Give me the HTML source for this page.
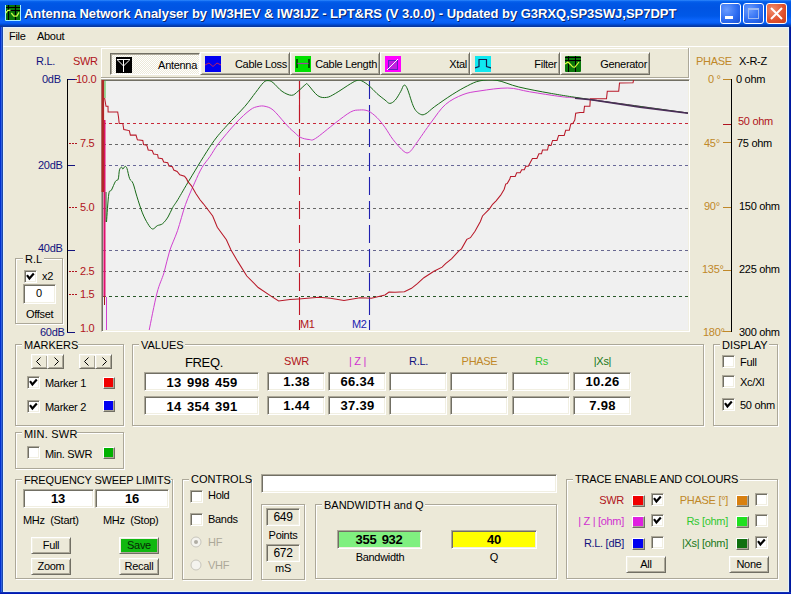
<!DOCTYPE html><html><head><meta charset="utf-8"><style>
html,body{margin:0;padding:0;}
body{width:791px;height:594px;position:relative;overflow:hidden;background:#0A4FD8;font-family:"Liberation Sans", sans-serif;}
.a{position:absolute;}
.t{position:absolute;line-height:1;white-space:nowrap;letter-spacing:-0.3px;}
</style></head><body>
<div class="a" style="left:0px;top:0px;width:791px;height:27px;background:linear-gradient(to bottom,#3A93FF 0px,#0B66F0 1px,#0058E6 3px,#0054E3 8px,#0058E8 16px,#0A64FA 20px,#0760F4 23px,#0050E0 24px,#0048C8 25px,#0838A0 26px,#0838A0 27px);"></div>
<div class="a" style="left:0px;top:27px;width:1px;height:567px;background:#0030D0;"></div>
<div class="a" style="left:1px;top:27px;width:1px;height:567px;background:#3060E0;"></div>
<div class="a" style="left:2px;top:27px;width:1px;height:567px;background:#1C48A8;"></div>
<div class="a" style="left:789px;top:27px;width:1px;height:567px;background:#102A90;"></div>
<div class="a" style="left:790px;top:27px;width:1px;height:567px;background:#0018A0;"></div>
<div class="a" style="left:0px;top:592px;width:791px;height:1px;background:#1030B0;"></div>
<div class="a" style="left:0px;top:593px;width:791px;height:1px;background:#0018B8;"></div>
<div class="a" style="left:3px;top:27px;width:786px;height:565px;background:#E4F2FC;"></div>
<div class="a" style="left:4px;top:28px;width:784px;height:563px;background:#ECE9D8;"></div>
<svg class="a" style="left:5px;top:5px" width="16" height="16"><rect width="16" height="16" fill="#0A760A"/><path d="M0.5 0 V15.5 H15.5 V0" stroke="#A8F0FF" stroke-width="1" fill="none"/><path d="M1 2.5 H15 M1 5.5 H15" stroke="#000" stroke-width="1"/><path d="M3.5 0 V15 M10.5 0 V15" stroke="#000" stroke-width="1.2"/><path d="M0.8 8 L2.5 5.6 L5.5 5.2 M6.3 8 L8.8 11.2 L11.8 11 L14 7.4" stroke="#C8FF48" stroke-width="1.3" fill="none"/></svg>
<div class="t" id="title" style="left:24px;top:7px;font-size:13px;font-weight:bold;color:#fff;letter-spacing:-0.025px;text-shadow:1px 1px 0 #0A246A;">Antenna Network Analyser by IW3HEV &amp; IW3IJZ - LPT&amp;RS (V 3.0.0) - Updated by G3RXQ,SP3SWJ,SP7DPT</div>
<div class="a" style="left:720px;top:3px;width:21px;height:21px;box-sizing:border-box;border:1px solid #fff;border-radius:3px;background:radial-gradient(circle at 30% 30%,#6A9CFF,#2A6AF0 60%,#1A50D0);"></div>
<div class="a" style="left:743px;top:3px;width:21px;height:21px;box-sizing:border-box;border:1px solid #fff;border-radius:3px;background:radial-gradient(circle at 30% 30%,#6A9CFF,#2A6AF0 60%,#1A50D0);"></div>
<div class="a" style="left:766px;top:3px;width:21px;height:21px;box-sizing:border-box;border:1px solid #fff;border-radius:3px;background:radial-gradient(circle at 30% 30%,#F08C6C,#E0502C 60%,#C8401C);"></div>
<div class="a" style="left:725px;top:16px;width:8px;height:3px;background:#fff;"></div>
<div class="a" style="left:748px;top:8px;width:11px;height:11px;box-sizing:border-box;border:1px solid #9DB9F0;border-top:2px solid #9DB9F0;"></div>
<svg class="a" style="left:766px;top:3px" width="21" height="21"><path d="M5 5 L16 16 M16 5 L5 16" stroke="#fff" stroke-width="2"/></svg>
<div class="t" style="left:9px;top:30.69px;font-size:11px;color:#000;">File</div>
<div class="t" style="left:37px;top:30.69px;font-size:11px;color:#000;">About</div>
<div class="a" style="left:3px;top:46px;width:786px;height:1px;background:#fff;"></div>
<div class="t" style="left:36px;top:55.69px;font-size:11px;color:#12127E;">R.L.</div>
<div class="t" style="left:73px;top:55.69px;font-size:11px;color:#B01420;">SWR</div>
<div class="a" style="left:67px;top:79px;width:1px;height:254px;background:#000;"></div>
<div class="a" style="left:68px;top:79px;width:7px;height:1px;background:#12127E;"></div>
<div class="a" style="left:68px;top:165px;width:7px;height:1px;background:#12127E;"></div>
<div class="a" style="left:68px;top:250px;width:7px;height:1px;background:#12127E;"></div>
<div class="a" style="left:68px;top:332px;width:7px;height:1px;background:#12127E;"></div>
<div class="a" style="left:67px;top:332px;width:8px;height:1px;background:#12127E;"></div>
<div class="t" style="left:42px;top:73.69px;font-size:11px;color:#12127E;">0dB</div>
<div class="t" style="left:38px;top:159.69px;font-size:11px;color:#12127E;">20dB</div>
<div class="t" style="left:38px;top:242.69px;font-size:11px;color:#12127E;">40dB</div>
<div class="t" style="left:40px;top:326.69px;font-size:11px;color:#12127E;">60dB</div>
<div class="t" style="left:76px;top:73.69px;font-size:11px;color:#B01420;">10.0</div>
<div class="a" style="left:75px;top:79px;width:2px;height:1px;background:#B01420;"></div>
<div class="a" style="left:69px;top:143px;width:2px;height:1px;background:#B01420;"></div>
<div class="a" style="left:72px;top:143px;width:2px;height:1px;background:#B01420;"></div>
<div class="a" style="left:75px;top:143px;width:2px;height:1px;background:#B01420;"></div>
<div class="t" style="left:80px;top:137.69px;font-size:11px;color:#B01420;">7.5</div>
<div class="a" style="left:69px;top:207px;width:2px;height:1px;background:#B01420;"></div>
<div class="a" style="left:72px;top:207px;width:2px;height:1px;background:#B01420;"></div>
<div class="a" style="left:75px;top:207px;width:2px;height:1px;background:#B01420;"></div>
<div class="t" style="left:80px;top:201.69px;font-size:11px;color:#B01420;">5.0</div>
<div class="a" style="left:69px;top:271px;width:2px;height:1px;background:#B01420;"></div>
<div class="a" style="left:72px;top:271px;width:2px;height:1px;background:#B01420;"></div>
<div class="a" style="left:75px;top:271px;width:2px;height:1px;background:#B01420;"></div>
<div class="t" style="left:80px;top:265.69px;font-size:11px;color:#B01420;">2.5</div>
<div class="a" style="left:69px;top:294px;width:2px;height:1px;background:#B01420;"></div>
<div class="a" style="left:72px;top:294px;width:2px;height:1px;background:#B01420;"></div>
<div class="a" style="left:75px;top:294px;width:2px;height:1px;background:#B01420;"></div>
<div class="t" style="left:80px;top:288.69px;font-size:11px;color:#B01420;">1.5</div>
<div class="t" style="left:80px;top:322.69px;font-size:11px;color:#B01420;">1.0</div>
<div class="a" style="left:16px;top:259px;width:48px;height:66px;box-sizing:border-box;border:1px solid #fff;"></div>
<div class="a" style="left:15px;top:258px;width:48px;height:66px;box-sizing:border-box;border:1px solid #ACA899;"></div>
<div class="a" style="left:23px;top:253px;width:21px;height:10px;background:#ECE9D8;"></div>
<div class="t" style="left:25px;top:253.69px;font-size:11px;color:#000;letter-spacing:0px;">R.L</div>
<div class="a" style="left:24px;top:270px;width:13px;height:13px;box-sizing:border-box;background:#fff;border-top:1px solid #ACA899;border-left:1px solid #ACA899;border-bottom:1px solid #fff;border-right:1px solid #fff;box-shadow:inset 1px 1px 0 #716F64, inset -1px -1px 0 #F1EFE2;"></div>
<svg class="a" style="left:24px;top:270px" width="13" height="13"><path d="M3 5.2 L5.4 8.4 L9.8 3.4" stroke="#000" stroke-width="2.2" fill="none"/></svg>
<div class="t" style="left:42px;top:270.69px;font-size:11px;color:#000;">x2</div>
<div class="a" style="left:23px;top:284px;width:33px;height:20px;background:#fff;box-sizing:border-box;border-top:1px solid #ACA899;border-left:1px solid #ACA899;border-bottom:1px solid #fff;border-right:1px solid #fff;box-shadow:inset 1px 1px 0 #716F64, inset -1px -1px 0 #F1EFE2;"></div>
<div class="t" style="left:24.0px;width:30px;text-align:center;top:288.19px;font-size:11px;color:#000;">0</div>
<div class="t" style="left:26px;top:308.69px;font-size:11px;color:#000;">Offset</div>
<div class="t" style="left:696px;top:55.69px;font-size:11px;color:#C08828;">PHASE</div>
<div class="t" style="left:739px;top:55.69px;font-size:11px;color:#000;">X-R-Z</div>
<div class="a" style="left:731px;top:79px;width:1px;height:253px;background:#000;"></div>
<div class="a" style="left:723px;top:79px;width:8px;height:1px;background:#C08828;"></div>
<div class="a" style="left:723px;top:142px;width:8px;height:1px;background:#C08828;"></div>
<div class="a" style="left:723px;top:207px;width:8px;height:1px;background:#C08828;"></div>
<div class="a" style="left:723px;top:270px;width:8px;height:1px;background:#C08828;"></div>
<div class="a" style="left:723px;top:331px;width:8px;height:1px;background:#C08828;"></div>
<div class="a" style="left:723px;top:124px;width:8px;height:1px;background:#B01420;"></div>
<div class="t" style="left:708px;top:73.69px;font-size:11px;color:#C08828;">0 °</div>
<div class="t" style="left:736px;top:73.69px;font-size:11px;color:#000;">0 ohm</div>
<div class="t" style="left:738px;top:115.69px;font-size:11px;color:#B01420;">50 ohm</div>
<div class="t" style="left:704px;top:137.69px;font-size:11px;color:#C08828;">45°</div>
<div class="t" style="left:737px;top:137.69px;font-size:11px;color:#000;">75 ohm</div>
<div class="t" style="left:704px;top:200.69px;font-size:11px;color:#C08828;">90°</div>
<div class="t" style="left:739px;top:200.69px;font-size:11px;color:#000;">150 ohm</div>
<div class="t" style="left:702px;top:263.69px;font-size:11px;color:#C08828;">135°</div>
<div class="t" style="left:739px;top:263.69px;font-size:11px;color:#000;">225 ohm</div>
<div class="t" style="left:703px;top:326.69px;font-size:11px;color:#C08828;">180°</div>
<div class="t" style="left:739px;top:326.69px;font-size:11px;color:#000;">300 ohm</div>
<div class="a" style="left:101px;top:48px;width:589px;height:31px;box-sizing:border-box;border:1px solid #fff;"></div>
<div class="a" style="left:101px;top:77px;width:588px;height:1px;background:#ACA899;"></div>
<div class="a" style="left:688px;top:48px;width:1px;height:30px;background:#ACA899;"></div>
<div class="a" style="left:110px;top:53px;width:90px;height:22px;box-sizing:border-box;background:repeating-conic-gradient(#fff 0 25%, #ECE9D8 0 50%) 0 0/2px 2px;border-top:1px solid #716F64;border-left:1px solid #716F64;border-bottom:1px solid #fff;border-right:1px solid #fff;box-shadow:inset 1px 1px 0 #ACA899;"></div>
<div class="t" style="left:117px;width:80px;text-align:right;top:59.69px;font-size:11px;color:#000;">Antenna</div>
<div class="a" style="left:200px;top:52px;width:90px;height:23px;background:#ECE9D8;box-sizing:border-box;border-top:1px solid #fff;border-left:1px solid #fff;border-bottom:1px solid #716F64;border-right:1px solid #716F64;box-shadow:inset 1px 1px 0 #F1EFE2, inset -1px -1px 0 #ACA899;"></div>
<div class="t" style="left:207px;width:80px;text-align:right;top:58.69px;font-size:11px;color:#000;">Cable Loss</div>
<div class="a" style="left:290px;top:52px;width:90px;height:23px;background:#ECE9D8;box-sizing:border-box;border-top:1px solid #fff;border-left:1px solid #fff;border-bottom:1px solid #716F64;border-right:1px solid #716F64;box-shadow:inset 1px 1px 0 #F1EFE2, inset -1px -1px 0 #ACA899;"></div>
<div class="t" style="left:297px;width:80px;text-align:right;top:58.69px;font-size:11px;color:#000;">Cable Length</div>
<div class="a" style="left:380px;top:52px;width:90px;height:23px;background:#ECE9D8;box-sizing:border-box;border-top:1px solid #fff;border-left:1px solid #fff;border-bottom:1px solid #716F64;border-right:1px solid #716F64;box-shadow:inset 1px 1px 0 #F1EFE2, inset -1px -1px 0 #ACA899;"></div>
<div class="t" style="left:387px;width:80px;text-align:right;top:58.69px;font-size:11px;color:#000;">Xtal</div>
<div class="a" style="left:470px;top:52px;width:90px;height:23px;background:#ECE9D8;box-sizing:border-box;border-top:1px solid #fff;border-left:1px solid #fff;border-bottom:1px solid #716F64;border-right:1px solid #716F64;box-shadow:inset 1px 1px 0 #F1EFE2, inset -1px -1px 0 #ACA899;"></div>
<div class="t" style="left:477px;width:80px;text-align:right;top:58.69px;font-size:11px;color:#000;">Filter</div>
<div class="a" style="left:560px;top:52px;width:90px;height:23px;background:#ECE9D8;box-sizing:border-box;border-top:1px solid #fff;border-left:1px solid #fff;border-bottom:1px solid #716F64;border-right:1px solid #716F64;box-shadow:inset 1px 1px 0 #F1EFE2, inset -1px -1px 0 #ACA899;"></div>
<div class="t" style="left:567px;width:80px;text-align:right;top:58.69px;font-size:11px;color:#000;">Generator</div>
<svg class="a" style="left:116px;top:57px" width="16" height="16"><rect width="16" height="16" fill="#000"/><path d="M1.3 2.8 L7.5 9 L13.8 2.8 M1 2.5 H14 M7.5 2.5 V15" stroke="#fff" stroke-width="1" fill="none"/></svg>
<svg class="a" style="left:205px;top:56px" width="16" height="16"><rect width="16" height="16" fill="#0000F0"/><path d="M0 9 L4 7 L8 10.5 L12 7 L16 9" stroke="#C02060" stroke-width="1" fill="none"/></svg>
<svg class="a" style="left:295px;top:56px" width="16" height="16"><rect width="16" height="16" fill="#00E000"/><path d="M2 3 V12 M14 3 V12" stroke="#000" stroke-width="1.2"/><path d="M2.5 7.5 H13.5" stroke="#A040A0" stroke-width="1.2"/></svg>
<svg class="a" style="left:385px;top:56px" width="16" height="16"><rect width="16" height="16" fill="#FF00FF"/><rect x="3.5" y="4.5" width="9" height="9" fill="#C020E0" stroke="#6020C0" stroke-width="1"/><path d="M2 14 L13 3" stroke="#fff" stroke-width="1"/></svg>
<svg class="a" style="left:475px;top:56px" width="16" height="16"><rect width="16" height="16" fill="#10E8F0"/><path d="M0 12 L4 10.5 V3.5 H11.5 V10.5 L16 12" stroke="#102050" stroke-width="1.2" fill="none"/></svg>
<svg class="a" style="left:565px;top:56px" width="16" height="16"><rect width="16" height="16" rx="1" fill="#0A780A"/><path d="M0 1.5 H16 M0 4.5 H16 M3.5 0 V16 M10.5 0 V16" stroke="#000" stroke-width="1"/><path d="M0 8 L3 6 L6 9 Q8 12 10 11 L14 6" stroke="#DFFF40" stroke-width="1.2" fill="none"/></svg>
<div class="a" style="left:101px;top:79px;width:589px;height:253px;background:#F0F0F0;box-sizing:border-box;border-top:1px solid #ACA899;border-left:1px solid #ACA899;border-bottom:1px solid #fff;border-right:1px solid #fff;box-shadow:inset 1px 1px 0 #716F64, inset -1px -1px 0 #F1EFE2;"></div>
<svg class="a" style="left:101px;top:80px" width="587" height="250" viewBox="101 80 587 250"><line x1="103" y1="123.5" x2="688" y2="123.5" stroke="#C82838" stroke-width="1" stroke-dasharray="3 3"/><line x1="103" y1="144.5" x2="688" y2="144.5" stroke="#686868" stroke-width="1" stroke-dasharray="3 3"/><line x1="103" y1="165.5" x2="688" y2="165.5" stroke="#686898" stroke-width="1" stroke-dasharray="3 3"/><line x1="103" y1="208.5" x2="688" y2="208.5" stroke="#686868" stroke-width="1" stroke-dasharray="3 3"/><line x1="103" y1="250.5" x2="688" y2="250.5" stroke="#686890" stroke-width="1" stroke-dasharray="3 3"/><line x1="103" y1="271.5" x2="688" y2="271.5" stroke="#686868" stroke-width="1" stroke-dasharray="3 3"/><line x1="103" y1="296.5" x2="688" y2="296.5" stroke="#285828" stroke-width="1" stroke-dasharray="3 3"/><line x1="299.5" y1="81" x2="299.5" y2="315" stroke="#C01828" stroke-width="1.1" stroke-dasharray="18 6"/><line x1="299.5" y1="320" x2="299.5" y2="330" stroke="#C01828" stroke-width="1.1"/><line x1="369.5" y1="81" x2="369.5" y2="315" stroke="#2020B0" stroke-width="1.1" stroke-dasharray="18 6"/><line x1="369.5" y1="320" x2="369.5" y2="330" stroke="#2020B0" stroke-width="1.1"/><line x1="299.5" y1="81" x2="299.5" y2="121" stroke="#C01828" stroke-width="1.1"/><path d="M149,331 C150.33,324.67 154.50,302.72 157,293 C159.50,283.28 161.90,279.70 164,272.7 C166.10,265.70 167.35,258.00 169.6,251 C171.85,244.00 174.85,238.45 177.5,230.7 C180.15,222.95 182.65,212.47 185.5,204.5 C188.35,196.53 191.85,189.07 194.6,182.9 C197.35,176.73 199.43,171.90 202,167.5 C204.57,163.10 207.27,160.45 210,156.5 C212.73,152.55 214.07,149.38 218.4,143.8 C222.73,138.22 230.73,128.63 236,123 C241.27,117.37 246.33,112.75 250,110 C253.67,107.25 255.50,107.12 258,106.5 C260.50,105.88 262.48,105.72 265,106.3 C267.52,106.88 269.93,107.38 273.1,110 C276.27,112.62 281.18,118.92 284,122 C286.82,125.08 288.37,126.87 290,128.5 C291.63,130.13 292.08,130.33 293.8,131.8 C295.52,133.27 297.77,136.02 300.3,137.3 C302.83,138.58 306.45,139.32 309,139.5 C311.55,139.68 311.22,141.15 315.6,138.4 C319.98,135.65 329.47,127.40 335.3,123 C341.13,118.60 346.58,114.17 350.6,112 C354.62,109.83 356.47,110.17 359.4,110 C362.33,109.83 365.27,109.73 368.2,111 C371.13,112.27 374.20,114.87 377,117.6 C379.80,120.33 382.33,123.75 385,127.4 C387.67,131.05 389.83,135.48 393,139.5 C396.17,143.52 401.25,149.42 404,151.5 C406.75,153.58 407.50,153.28 409.5,152 C411.50,150.72 412.35,148.80 416,143.8 C419.65,138.80 426.47,128.57 431.4,122 C436.33,115.43 440.33,108.97 445.6,104.4 C450.87,99.83 457.27,96.85 463,94.6 C468.73,92.35 472.53,92.00 480,90.9 C487.47,89.80 499.52,87.85 507.8,88 C516.08,88.15 520.57,90.33 529.7,91.8 C538.83,93.27 552.38,95.50 562.6,96.8 C572.82,98.10 570.10,96.90 591,99.6 C611.90,102.30 671.83,110.77 688,113" fill="none" stroke="#D040D0" stroke-width="1"/><path d="M105,81 L105,98" fill="none" stroke="#40C040" stroke-width="1"/><path d="M106.5,222 C106.88,217.33 107.97,199.33 108.8,194 C109.63,188.67 110.38,192.12 111.5,190 C112.62,187.88 114.38,183.10 115.5,181.3 C116.62,179.50 117.53,181.12 118.2,179.2 C118.87,177.28 118.93,171.82 119.5,169.8 C120.07,167.78 121.03,167.22 121.6,167.1 C122.17,166.98 122.33,169.22 122.9,169.1 C123.47,168.98 124.32,166.50 125,166.4 C125.68,166.30 126.23,166.47 127,168.5 C127.77,170.53 128.60,176.13 129.6,178.6 C130.60,181.07 131.77,180.27 133,183.3 C134.23,186.33 135.43,191.87 137,196.8 C138.57,201.73 140.60,208.42 142.4,212.9 C144.20,217.38 146.12,221.02 147.8,223.7 C149.48,226.38 150.92,228.67 152.5,229 C154.08,229.33 155.62,226.58 157.3,225.7 C158.98,224.82 160.82,225.15 162.6,223.7 C164.38,222.25 166.32,219.70 168,217 C169.68,214.30 171.03,210.43 172.7,207.5 C174.37,204.57 175.12,204.15 178,199.4 C180.88,194.65 184.35,188.27 190,179 C195.65,169.73 205.70,152.77 211.9,143.8 C218.10,134.83 221.73,131.40 227.2,125.2 C232.67,119.00 239.97,112.05 244.7,106.6 C249.43,101.15 252.47,96.52 255.6,92.5 C258.73,88.48 261.43,84.48 263.5,82.5 C265.57,80.52 266.42,80.58 268,80.6 C269.58,80.62 270.67,80.82 273,82.6 C275.33,84.38 278.90,89.18 282,91.3 C285.10,93.42 288.93,95.30 291.6,95.3 C294.27,95.30 295.63,93.13 298,91.3 C300.37,89.47 304.13,85.39 305.8,84.3 C307.47,83.21 306.00,82.85 308,84.75 C310.00,86.65 314.70,93.59 317.8,95.7 C320.90,97.81 323.68,97.77 326.6,97.4 C329.52,97.03 331.30,95.78 335.3,93.5 C339.30,91.22 346.95,85.88 350.6,83.7 C354.25,81.52 355.37,80.88 357.2,80.4 C359.03,79.92 359.60,79.90 361.6,80.8 C363.60,81.70 366.65,83.68 369.2,85.8 C371.75,87.92 374.27,91.13 376.9,93.5 C379.53,95.87 382.85,98.35 385,100 C387.15,101.65 388.08,103.40 389.8,103.4 C391.52,103.40 393.47,102.02 395.3,100 C397.13,97.98 399.35,93.77 400.8,91.3 C402.25,88.83 402.90,85.58 404,85.2 C405.10,84.82 405.73,85.25 407.4,89 C409.07,92.75 411.82,103.48 414,107.7 C416.18,111.92 418.50,113.32 420.5,114.3 C422.50,115.28 423.63,114.88 426,113.6 C428.37,112.32 430.33,109.77 434.7,106.6 C439.07,103.43 446.73,98.07 452.2,94.6 C457.67,91.13 462.87,88.10 467.5,85.8 C472.13,83.50 475.08,81.70 480,80.8 C484.92,79.90 490.53,79.37 497,80.4 C503.47,81.43 509.70,84.82 518.8,87 C527.90,89.18 539.57,91.40 551.6,93.5 C563.63,95.60 568.27,96.35 591,99.6 C613.73,102.85 671.83,110.77 688,113" fill="none" stroke="#186A18" stroke-width="1"/><line x1="106" y1="192" x2="106" y2="222" stroke="#186A18" stroke-width="1"/><line x1="104.5" y1="120" x2="104.5" y2="297" stroke="#E0106E" stroke-width="2"/><line x1="106.5" y1="297" x2="106.5" y2="330" stroke="#D040D0" stroke-width="1"/><line x1="104.5" y1="296" x2="104.5" y2="305" stroke="#A01818" stroke-width="1"/><polyline points="104.6,98 106,106.3 108,106.3 108.1,112 117.7,112 118.5,117 119.2,123.5 122.8,123.5 123.8,129.6 129.3,130.6 130.4,135.1 136,135.1 137.4,139.8 142.8,140.5 143.5,144.5 146.8,145.2 148.2,150 152.2,150.6 153.6,154 157.6,154.6 158.3,158 162.3,158.7 163.7,162 167.7,162.7 169,166 172.4,166.8 173.8,170.1 177.1,171.5 179.8,174.8 184.5,176.2 186.6,178.9 187.9,181.6 191.3,185.6 196,193.7 200.2,200 203.4,203.8 212.7,216 217.3,227.3 226.4,239.8 231,250 237.7,261.4 246.8,276 258.2,287.5 271.8,296.6 278.6,301 290,299.5 298.6,298.9 319,297.3 330.5,298.2 344,300.5 360,297.7 371.4,298.2 385,295 389,292 395,292.2 404.4,291.8 411.5,288.3 417.4,283.6 423.9,277.7 433.9,271.2 442.1,267.1 445.6,263.6 451.5,258.9 458.6,251.2 461.5,248.8 466.8,239.4 470.4,237.7 475,231.2 480.4,221.5 482.5,216 489.5,208.9 492.6,204.3 496.1,200.8 500.7,195.2 504.2,189.2 505.7,184.1 507.2,183.6 509.8,179 510.6,176.4 515.2,176.4 516.7,172.8 520.2,172.8 521.7,169.7 524.3,169.7 525.8,166.2 528.3,166.2 530.3,162.5 532.4,158.5 536.9,158.5 538.9,153.8 541.5,153.8 542.5,150 547.5,150 548.5,145.5 551,145.5 552.6,140.4 557,140.4 558.6,135.4 564.2,135.4 565.7,130.3 569.3,130.3 570.8,124 572.8,123.5 574.8,120 575.7,113.2 580,112.4 583.8,112.4 584.5,106.3 589.9,106.3 590.3,98.8 606.5,98.8 607.3,91.2 618.7,91.2 619.5,83 633,82.8 634,78" fill="none" stroke="#B81828" stroke-width="1.05"/><line x1="102.8" y1="80" x2="102.8" y2="192" stroke="#B02828" stroke-width="2.6"/><polyline points="575,98.2 591,99.8 640,107.3 688,113.2" fill="none" stroke="#4A2C58" stroke-width="1.5"/></svg>
<div class="t" style="left:300px;top:318.69px;font-size:11px;color:#B01420;">M1</div>
<div class="t" style="left:352px;top:318.69px;font-size:11px;color:#2020B0;">M2</div>
<div class="a" style="left:16px;top:345px;width:109px;height:82px;box-sizing:border-box;border:1px solid #fff;"></div>
<div class="a" style="left:15px;top:344px;width:109px;height:82px;box-sizing:border-box;border:1px solid #ACA899;"></div>
<div class="a" style="left:22px;top:339px;width:56px;height:10px;background:#ECE9D8;"></div>
<div class="t" style="left:24px;top:339.69px;font-size:11px;color:#000;letter-spacing:0px;">MARKERS</div>
<div class="a" style="left:31px;top:354px;width:17px;height:15px;background:#ECE9D8;box-sizing:border-box;border-top:1px solid #fff;border-left:1px solid #fff;border-bottom:1px solid #716F64;border-right:1px solid #716F64;box-shadow:inset 1px 1px 0 #F1EFE2, inset -1px -1px 0 #ACA899;"></div>
<div class="a" style="left:47px;top:354px;width:17px;height:15px;background:#ECE9D8;box-sizing:border-box;border-top:1px solid #fff;border-left:1px solid #fff;border-bottom:1px solid #716F64;border-right:1px solid #716F64;box-shadow:inset 1px 1px 0 #F1EFE2, inset -1px -1px 0 #ACA899;"></div>
<svg class="a" style="left:31px;top:354px" width="33" height="15"><path d="M9.5 3.5 L5.5 7.5 L9.5 11.5 M23.5 3.5 L27.5 7.5 L23.5 11.5" stroke="#000" stroke-width="1" fill="none"/></svg>
<div class="a" style="left:79px;top:354px;width:17px;height:15px;background:#ECE9D8;box-sizing:border-box;border-top:1px solid #fff;border-left:1px solid #fff;border-bottom:1px solid #716F64;border-right:1px solid #716F64;box-shadow:inset 1px 1px 0 #F1EFE2, inset -1px -1px 0 #ACA899;"></div>
<div class="a" style="left:95px;top:354px;width:17px;height:15px;background:#ECE9D8;box-sizing:border-box;border-top:1px solid #fff;border-left:1px solid #fff;border-bottom:1px solid #716F64;border-right:1px solid #716F64;box-shadow:inset 1px 1px 0 #F1EFE2, inset -1px -1px 0 #ACA899;"></div>
<svg class="a" style="left:79px;top:354px" width="33" height="15"><path d="M9.5 3.5 L5.5 7.5 L9.5 11.5 M23.5 3.5 L27.5 7.5 L23.5 11.5" stroke="#000" stroke-width="1" fill="none"/></svg>
<div class="a" style="left:27px;top:376px;width:13px;height:13px;box-sizing:border-box;background:#fff;border-top:1px solid #ACA899;border-left:1px solid #ACA899;border-bottom:1px solid #fff;border-right:1px solid #fff;box-shadow:inset 1px 1px 0 #716F64, inset -1px -1px 0 #F1EFE2;"></div>
<svg class="a" style="left:27px;top:376px" width="13" height="13"><path d="M3 5.2 L5.4 8.4 L9.8 3.4" stroke="#000" stroke-width="2.2" fill="none"/></svg>
<div class="t" style="left:45px;top:377.69px;font-size:11px;color:#000;">Marker 1</div>
<div class="a" style="left:103px;top:377px;width:12px;height:12px;box-sizing:border-box;background:#F00000;border-top:1px solid #fff;border-left:1px solid #fff;border-bottom:1px solid #716F64;border-right:1px solid #716F64;box-shadow:inset -1px -1px 0 #ACA899;"></div>
<div class="a" style="left:27px;top:400px;width:13px;height:13px;box-sizing:border-box;background:#fff;border-top:1px solid #ACA899;border-left:1px solid #ACA899;border-bottom:1px solid #fff;border-right:1px solid #fff;box-shadow:inset 1px 1px 0 #716F64, inset -1px -1px 0 #F1EFE2;"></div>
<svg class="a" style="left:27px;top:400px" width="13" height="13"><path d="M3 5.2 L5.4 8.4 L9.8 3.4" stroke="#000" stroke-width="2.2" fill="none"/></svg>
<div class="t" style="left:45px;top:401.69px;font-size:11px;color:#000;">Marker 2</div>
<div class="a" style="left:103px;top:400px;width:12px;height:12px;box-sizing:border-box;background:#0000F0;border-top:1px solid #fff;border-left:1px solid #fff;border-bottom:1px solid #716F64;border-right:1px solid #716F64;box-shadow:inset -1px -1px 0 #ACA899;"></div>
<div class="a" style="left:16px;top:433px;width:109px;height:37px;box-sizing:border-box;border:1px solid #fff;"></div>
<div class="a" style="left:15px;top:432px;width:109px;height:37px;box-sizing:border-box;border:1px solid #ACA899;"></div>
<div class="a" style="left:22px;top:427px;width:55px;height:10px;background:#ECE9D8;"></div>
<div class="t" style="left:24px;top:428.69px;font-size:11px;color:#000;letter-spacing:0.2px;">MIN. SWR</div>
<div class="a" style="left:27px;top:446px;width:13px;height:13px;box-sizing:border-box;background:#fff;border-top:1px solid #ACA899;border-left:1px solid #ACA899;border-bottom:1px solid #fff;border-right:1px solid #fff;box-shadow:inset 1px 1px 0 #716F64, inset -1px -1px 0 #F1EFE2;"></div>
<div class="t" style="left:45px;top:448.69px;font-size:11px;color:#000;">Min. SWR</div>
<div class="a" style="left:103px;top:447px;width:12px;height:12px;box-sizing:border-box;background:#00B000;border-top:1px solid #fff;border-left:1px solid #fff;border-bottom:1px solid #716F64;border-right:1px solid #716F64;box-shadow:inset -1px -1px 0 #ACA899;"></div>
<div class="a" style="left:133px;top:345px;width:572px;height:82px;box-sizing:border-box;border:1px solid #fff;"></div>
<div class="a" style="left:132px;top:344px;width:572px;height:82px;box-sizing:border-box;border:1px solid #ACA899;"></div>
<div class="a" style="left:139px;top:339px;width:46px;height:10px;background:#ECE9D8;"></div>
<div class="t" style="left:141px;top:339.69px;font-size:11px;color:#000;letter-spacing:0px;">VALUES</div>
<div class="t" style="left:164.0px;width:80px;text-align:center;top:356.00px;font-size:13px;color:#000;">FREQ.</div>
<div class="a" style="left:144px;top:372px;width:115px;height:19px;background:#fff;box-sizing:border-box;border-top:1px solid #ACA899;border-left:1px solid #ACA899;border-bottom:1px solid #fff;border-right:1px solid #fff;box-shadow:inset 1px 1px 0 #716F64, inset -1px -1px 0 #F1EFE2;"></div>
<div class="a" style="left:144px;top:396px;width:115px;height:19px;background:#fff;box-sizing:border-box;border-top:1px solid #ACA899;border-left:1px solid #ACA899;border-bottom:1px solid #fff;border-right:1px solid #fff;box-shadow:inset 1px 1px 0 #716F64, inset -1px -1px 0 #F1EFE2;"></div>
<div class="t" style="left:147.0px;width:110px;text-align:center;top:376.00px;font-size:13px;color:#000;font-weight:bold;letter-spacing:0.3px;word-spacing:1.5px;">13 998 459</div>
<div class="t" style="left:147.0px;width:110px;text-align:center;top:400.00px;font-size:13px;color:#000;font-weight:bold;letter-spacing:0.3px;word-spacing:1.5px;">14 354 391</div>
<div class="t" style="left:266.5px;width:60px;text-align:center;top:355.69px;font-size:11px;color:#B01420;">SWR</div>
<div class="a" style="left:267px;top:372px;width:58px;height:19px;background:#fff;box-sizing:border-box;border-top:1px solid #ACA899;border-left:1px solid #ACA899;border-bottom:1px solid #fff;border-right:1px solid #fff;box-shadow:inset 1px 1px 0 #716F64, inset -1px -1px 0 #F1EFE2;"></div>
<div class="a" style="left:267px;top:396px;width:58px;height:19px;background:#fff;box-sizing:border-box;border-top:1px solid #ACA899;border-left:1px solid #ACA899;border-bottom:1px solid #fff;border-right:1px solid #fff;box-shadow:inset 1px 1px 0 #716F64, inset -1px -1px 0 #F1EFE2;"></div>
<div class="t" style="left:268.5px;width:56px;text-align:center;top:375.00px;font-size:13px;color:#000;font-weight:bold;letter-spacing:0.3px;">1.38</div>
<div class="t" style="left:268.5px;width:56px;text-align:center;top:399.00px;font-size:13px;color:#000;font-weight:bold;letter-spacing:0.3px;">1.44</div>
<div class="t" style="left:327.5px;width:60px;text-align:center;top:355.69px;font-size:11px;color:#D030D0;">| Z |</div>
<div class="a" style="left:328px;top:372px;width:58px;height:19px;background:#fff;box-sizing:border-box;border-top:1px solid #ACA899;border-left:1px solid #ACA899;border-bottom:1px solid #fff;border-right:1px solid #fff;box-shadow:inset 1px 1px 0 #716F64, inset -1px -1px 0 #F1EFE2;"></div>
<div class="a" style="left:328px;top:396px;width:58px;height:19px;background:#fff;box-sizing:border-box;border-top:1px solid #ACA899;border-left:1px solid #ACA899;border-bottom:1px solid #fff;border-right:1px solid #fff;box-shadow:inset 1px 1px 0 #716F64, inset -1px -1px 0 #F1EFE2;"></div>
<div class="t" style="left:329.5px;width:56px;text-align:center;top:375.00px;font-size:13px;color:#000;font-weight:bold;letter-spacing:0.3px;">66.34</div>
<div class="t" style="left:329.5px;width:56px;text-align:center;top:399.00px;font-size:13px;color:#000;font-weight:bold;letter-spacing:0.3px;">37.39</div>
<div class="t" style="left:388.5px;width:60px;text-align:center;top:355.69px;font-size:11px;color:#12127E;">R.L.</div>
<div class="a" style="left:389px;top:372px;width:58px;height:19px;background:#fff;box-sizing:border-box;border-top:1px solid #ACA899;border-left:1px solid #ACA899;border-bottom:1px solid #fff;border-right:1px solid #fff;box-shadow:inset 1px 1px 0 #716F64, inset -1px -1px 0 #F1EFE2;"></div>
<div class="a" style="left:389px;top:396px;width:58px;height:19px;background:#fff;box-sizing:border-box;border-top:1px solid #ACA899;border-left:1px solid #ACA899;border-bottom:1px solid #fff;border-right:1px solid #fff;box-shadow:inset 1px 1px 0 #716F64, inset -1px -1px 0 #F1EFE2;"></div>
<div class="t" style="left:449.5px;width:60px;text-align:center;top:355.69px;font-size:11px;color:#C08828;">PHASE</div>
<div class="a" style="left:450px;top:372px;width:58px;height:19px;background:#fff;box-sizing:border-box;border-top:1px solid #ACA899;border-left:1px solid #ACA899;border-bottom:1px solid #fff;border-right:1px solid #fff;box-shadow:inset 1px 1px 0 #716F64, inset -1px -1px 0 #F1EFE2;"></div>
<div class="a" style="left:450px;top:396px;width:58px;height:19px;background:#fff;box-sizing:border-box;border-top:1px solid #ACA899;border-left:1px solid #ACA899;border-bottom:1px solid #fff;border-right:1px solid #fff;box-shadow:inset 1px 1px 0 #716F64, inset -1px -1px 0 #F1EFE2;"></div>
<div class="t" style="left:511.5px;width:60px;text-align:center;top:355.69px;font-size:11px;color:#30C830;">Rs</div>
<div class="a" style="left:512px;top:372px;width:58px;height:19px;background:#fff;box-sizing:border-box;border-top:1px solid #ACA899;border-left:1px solid #ACA899;border-bottom:1px solid #fff;border-right:1px solid #fff;box-shadow:inset 1px 1px 0 #716F64, inset -1px -1px 0 #F1EFE2;"></div>
<div class="a" style="left:512px;top:396px;width:58px;height:19px;background:#fff;box-sizing:border-box;border-top:1px solid #ACA899;border-left:1px solid #ACA899;border-bottom:1px solid #fff;border-right:1px solid #fff;box-shadow:inset 1px 1px 0 #716F64, inset -1px -1px 0 #F1EFE2;"></div>
<div class="t" style="left:572.5px;width:60px;text-align:center;top:355.69px;font-size:11px;color:#187818;">|Xs|</div>
<div class="a" style="left:573px;top:372px;width:58px;height:19px;background:#fff;box-sizing:border-box;border-top:1px solid #ACA899;border-left:1px solid #ACA899;border-bottom:1px solid #fff;border-right:1px solid #fff;box-shadow:inset 1px 1px 0 #716F64, inset -1px -1px 0 #F1EFE2;"></div>
<div class="a" style="left:573px;top:396px;width:58px;height:19px;background:#fff;box-sizing:border-box;border-top:1px solid #ACA899;border-left:1px solid #ACA899;border-bottom:1px solid #fff;border-right:1px solid #fff;box-shadow:inset 1px 1px 0 #716F64, inset -1px -1px 0 #F1EFE2;"></div>
<div class="t" style="left:574.5px;width:56px;text-align:center;top:375.00px;font-size:13px;color:#000;font-weight:bold;letter-spacing:0.3px;">10.26</div>
<div class="t" style="left:574.5px;width:56px;text-align:center;top:399.00px;font-size:13px;color:#000;font-weight:bold;letter-spacing:0.3px;">7.98</div>
<div class="a" style="left:714px;top:345px;width:65px;height:82px;box-sizing:border-box;border:1px solid #fff;"></div>
<div class="a" style="left:713px;top:344px;width:65px;height:82px;box-sizing:border-box;border:1px solid #ACA899;"></div>
<div class="a" style="left:720px;top:339px;width:49px;height:10px;background:#ECE9D8;"></div>
<div class="t" style="left:722px;top:339.69px;font-size:11px;color:#000;letter-spacing:0px;">DISPLAY</div>
<div class="a" style="left:722px;top:355px;width:13px;height:13px;box-sizing:border-box;background:#fff;border-top:1px solid #ACA899;border-left:1px solid #ACA899;border-bottom:1px solid #fff;border-right:1px solid #fff;box-shadow:inset 1px 1px 0 #716F64, inset -1px -1px 0 #F1EFE2;"></div>
<div class="t" style="left:740px;top:356.69px;font-size:11px;color:#000;">Full</div>
<div class="a" style="left:722px;top:375px;width:13px;height:13px;box-sizing:border-box;background:#fff;border-top:1px solid #ACA899;border-left:1px solid #ACA899;border-bottom:1px solid #fff;border-right:1px solid #fff;box-shadow:inset 1px 1px 0 #716F64, inset -1px -1px 0 #F1EFE2;"></div>
<div class="t" style="left:740px;top:376.69px;font-size:11px;color:#000;">Xc/Xl</div>
<div class="a" style="left:722px;top:398px;width:13px;height:13px;box-sizing:border-box;background:#fff;border-top:1px solid #ACA899;border-left:1px solid #ACA899;border-bottom:1px solid #fff;border-right:1px solid #fff;box-shadow:inset 1px 1px 0 #716F64, inset -1px -1px 0 #F1EFE2;"></div>
<svg class="a" style="left:722px;top:398px" width="13" height="13"><path d="M3 5.2 L5.4 8.4 L9.8 3.4" stroke="#000" stroke-width="2.2" fill="none"/></svg>
<div class="t" style="left:740px;top:399.69px;font-size:11px;color:#000;">50 ohm</div>
<div class="a" style="left:16px;top:480px;width:158px;height:100px;box-sizing:border-box;border:1px solid #fff;"></div>
<div class="a" style="left:15px;top:479px;width:158px;height:100px;box-sizing:border-box;border:1px solid #ACA899;"></div>
<div class="a" style="left:22px;top:474px;width:149px;height:10px;background:#ECE9D8;"></div>
<div class="t" style="left:24px;top:474.69px;font-size:11px;color:#000;letter-spacing:-0.15px;">FREQUENCY SWEEP LIMITS</div>
<div class="a" style="left:23px;top:489px;width:71px;height:19px;background:#fff;box-sizing:border-box;border-top:1px solid #ACA899;border-left:1px solid #ACA899;border-bottom:1px solid #fff;border-right:1px solid #fff;box-shadow:inset 1px 1px 0 #716F64, inset -1px -1px 0 #F1EFE2;"></div>
<div class="a" style="left:95px;top:489px;width:74px;height:19px;background:#fff;box-sizing:border-box;border-top:1px solid #ACA899;border-left:1px solid #ACA899;border-bottom:1px solid #fff;border-right:1px solid #fff;box-shadow:inset 1px 1px 0 #716F64, inset -1px -1px 0 #F1EFE2;"></div>
<div class="t" style="left:28.0px;width:60px;text-align:center;top:492.00px;font-size:13px;color:#000;font-weight:bold;">13</div>
<div class="t" style="left:102.0px;width:60px;text-align:center;top:492.00px;font-size:13px;color:#000;font-weight:bold;">16</div>
<div class="t" style="left:23px;top:514.69px;font-size:11px;color:#000;">MHz&nbsp; (Start)</div>
<div class="t" style="left:103px;top:514.69px;font-size:11px;color:#000;">MHz&nbsp; (Stop)</div>
<div class="a" style="left:31px;top:537px;width:40px;height:17px;background:#ECE9D8;box-sizing:border-box;border-top:1px solid #fff;border-left:1px solid #fff;border-bottom:1px solid #716F64;border-right:1px solid #716F64;box-shadow:inset 1px 1px 0 #F1EFE2, inset -1px -1px 0 #ACA899;"></div>
<div class="t" style="left:31.5px;width:39px;text-align:center;top:539.69px;font-size:11px;color:#000;">Full</div>
<div class="a" style="left:31px;top:558px;width:40px;height:17px;background:#ECE9D8;box-sizing:border-box;border-top:1px solid #fff;border-left:1px solid #fff;border-bottom:1px solid #716F64;border-right:1px solid #716F64;box-shadow:inset 1px 1px 0 #F1EFE2, inset -1px -1px 0 #ACA899;"></div>
<div class="t" style="left:31.5px;width:39px;text-align:center;top:560.69px;font-size:11px;color:#000;">Zoom</div>
<div class="a" style="left:119px;top:537px;width:40px;height:17px;background:#10B810;box-sizing:border-box;border-top:1px solid #fff;border-left:1px solid #fff;border-bottom:1px solid #716F64;border-right:1px solid #716F64;box-shadow:inset 1px 1px 0 #F1EFE2, inset -1px -1px 0 #ACA899;"></div>
<div class="t" style="left:119.5px;width:39px;text-align:center;top:539.69px;font-size:11px;color:#062806;">Save</div>
<div class="a" style="left:119px;top:558px;width:40px;height:17px;background:#ECE9D8;box-sizing:border-box;border-top:1px solid #fff;border-left:1px solid #fff;border-bottom:1px solid #716F64;border-right:1px solid #716F64;box-shadow:inset 1px 1px 0 #F1EFE2, inset -1px -1px 0 #ACA899;"></div>
<div class="t" style="left:119.5px;width:39px;text-align:center;top:560.69px;font-size:11px;color:#000;">Recall</div>
<div class="a" style="left:183px;top:480px;width:70px;height:101px;box-sizing:border-box;border:1px solid #fff;"></div>
<div class="a" style="left:182px;top:479px;width:70px;height:101px;box-sizing:border-box;border:1px solid #ACA899;"></div>
<div class="a" style="left:189px;top:474px;width:62px;height:10px;background:#ECE9D8;"></div>
<div class="t" style="left:191px;top:473.69px;font-size:11px;color:#000;letter-spacing:0px;">CONTROLS</div>
<div class="a" style="left:190px;top:490px;width:13px;height:13px;box-sizing:border-box;background:#fff;border-top:1px solid #ACA899;border-left:1px solid #ACA899;border-bottom:1px solid #fff;border-right:1px solid #fff;box-shadow:inset 1px 1px 0 #716F64, inset -1px -1px 0 #F1EFE2;"></div>
<div class="t" style="left:208px;top:490.19px;font-size:11px;color:#000;">Hold</div>
<div class="a" style="left:190px;top:513px;width:13px;height:13px;box-sizing:border-box;background:#fff;border-top:1px solid #ACA899;border-left:1px solid #ACA899;border-bottom:1px solid #fff;border-right:1px solid #fff;box-shadow:inset 1px 1px 0 #716F64, inset -1px -1px 0 #F1EFE2;"></div>
<div class="t" style="left:208px;top:514.19px;font-size:11px;color:#000;">Bands</div>
<svg class="a" style="left:190px;top:536px" width="12" height="12"><circle cx="6" cy="6" r="5" fill="#F4F3EE" stroke="#C8C6BC" stroke-width="1"/><circle cx="6" cy="6" r="2" fill="#B0AEA4"/></svg>
<div class="t" style="left:208px;top:536.69px;font-size:11px;color:#ACA899;">HF</div>
<svg class="a" style="left:190px;top:559px" width="12" height="12"><circle cx="6" cy="6" r="5" fill="#F4F3EE" stroke="#C8C6BC" stroke-width="1"/></svg>
<div class="t" style="left:208px;top:560.19px;font-size:11px;color:#ACA899;">VHF</div>
<div class="a" style="left:261px;top:474px;width:296px;height:19px;background:#fff;box-sizing:border-box;border-top:1px solid #ACA899;border-left:1px solid #ACA899;border-bottom:1px solid #fff;border-right:1px solid #fff;box-shadow:inset 1px 1px 0 #716F64, inset -1px -1px 0 #F1EFE2;"></div>
<div class="a" style="left:262px;top:505px;width:44px;height:76px;box-sizing:border-box;border:1px solid #fff;"></div>
<div class="a" style="left:261px;top:504px;width:44px;height:76px;box-sizing:border-box;border:1px solid #ACA899;"></div>
<div class="a" style="left:266px;top:508px;width:34px;height:18px;background:#ECE9D8;box-sizing:border-box;border-top:1px solid #ACA899;border-left:1px solid #ACA899;border-bottom:1px solid #fff;border-right:1px solid #fff;box-shadow:inset 1px 1px 0 #716F64, inset -1px -1px 0 #F1EFE2;"></div>
<div class="t" style="left:267.0px;width:32px;text-align:center;top:510.84px;font-size:12px;color:#000;">649</div>
<div class="t" style="left:263.0px;width:40px;text-align:center;top:529.69px;font-size:11px;color:#000;">Points</div>
<div class="a" style="left:266px;top:544px;width:34px;height:18px;background:#ECE9D8;box-sizing:border-box;border-top:1px solid #ACA899;border-left:1px solid #ACA899;border-bottom:1px solid #fff;border-right:1px solid #fff;box-shadow:inset 1px 1px 0 #716F64, inset -1px -1px 0 #F1EFE2;"></div>
<div class="t" style="left:267.0px;width:32px;text-align:center;top:546.84px;font-size:12px;color:#000;">672</div>
<div class="t" style="left:263.0px;width:40px;text-align:center;top:562.69px;font-size:11px;color:#000;">mS</div>
<div class="a" style="left:316px;top:505px;width:242px;height:75px;box-sizing:border-box;border:1px solid #fff;"></div>
<div class="a" style="left:315px;top:504px;width:242px;height:75px;box-sizing:border-box;border:1px solid #ACA899;"></div>
<div class="a" style="left:322px;top:499px;width:103px;height:10px;background:#ECE9D8;"></div>
<div class="t" style="left:324px;top:499.69px;font-size:11px;color:#000;letter-spacing:0px;">BANDWIDTH and Q</div>
<div class="a" style="left:337px;top:530px;width:85px;height:19px;background:#80F080;box-sizing:border-box;border-top:1px solid #ACA899;border-left:1px solid #ACA899;border-bottom:1px solid #fff;border-right:1px solid #fff;box-shadow:inset 1px 1px 0 #716F64, inset -1px -1px 0 #F1EFE2;"></div>
<div class="a" style="left:451px;top:530px;width:86px;height:19px;background:#FFFF00;box-sizing:border-box;border-top:1px solid #ACA899;border-left:1px solid #ACA899;border-bottom:1px solid #fff;border-right:1px solid #fff;box-shadow:inset 1px 1px 0 #716F64, inset -1px -1px 0 #F1EFE2;"></div>
<div class="t" style="left:339.0px;width:80px;text-align:center;top:533.00px;font-size:13px;color:#000;font-weight:bold;word-spacing:2px;">355 932</div>
<div class="t" style="left:454.0px;width:80px;text-align:center;top:533.00px;font-size:13px;color:#000;font-weight:bold;">40</div>
<div class="t" style="left:340.0px;width:80px;text-align:center;top:551.69px;font-size:11px;color:#000;">Bandwidth</div>
<div class="t" style="left:474.0px;width:40px;text-align:center;top:551.69px;font-size:11px;color:#000;">Q</div>
<div class="a" style="left:567px;top:480px;width:212px;height:100px;box-sizing:border-box;border:1px solid #fff;"></div>
<div class="a" style="left:566px;top:479px;width:212px;height:100px;box-sizing:border-box;border:1px solid #ACA899;"></div>
<div class="a" style="left:573px;top:474px;width:167px;height:10px;background:#ECE9D8;"></div>
<div class="t" style="left:575px;top:474.19px;font-size:11px;color:#000;letter-spacing:-0.15px;">TRACE ENABLE AND COLOURS</div>
<div class="t" style="left:524px;width:100px;text-align:right;top:495.19px;font-size:11px;color:#B01420;">SWR</div>
<div class="a" style="left:632px;top:495px;width:13px;height:12px;box-sizing:border-box;background:#F00000;border-top:1px solid #fff;border-left:1px solid #fff;border-bottom:1px solid #716F64;border-right:1px solid #716F64;box-shadow:inset -1px -1px 0 #ACA899;"></div>
<div class="a" style="left:651px;top:493px;width:13px;height:13px;box-sizing:border-box;background:#fff;border-top:1px solid #ACA899;border-left:1px solid #ACA899;border-bottom:1px solid #fff;border-right:1px solid #fff;box-shadow:inset 1px 1px 0 #716F64, inset -1px -1px 0 #F1EFE2;"></div>
<svg class="a" style="left:651px;top:493px" width="13" height="13"><path d="M3 5.2 L5.4 8.4 L9.8 3.4" stroke="#000" stroke-width="2.2" fill="none"/></svg>
<div class="t" style="left:628px;width:100px;text-align:right;top:495.19px;font-size:11px;color:#C08828;">PHASE [°]</div>
<div class="a" style="left:736px;top:495px;width:13px;height:12px;box-sizing:border-box;background:#D88010;border-top:1px solid #fff;border-left:1px solid #fff;border-bottom:1px solid #716F64;border-right:1px solid #716F64;box-shadow:inset -1px -1px 0 #ACA899;"></div>
<div class="a" style="left:755px;top:493px;width:13px;height:13px;box-sizing:border-box;background:#fff;border-top:1px solid #ACA899;border-left:1px solid #ACA899;border-bottom:1px solid #fff;border-right:1px solid #fff;box-shadow:inset 1px 1px 0 #716F64, inset -1px -1px 0 #F1EFE2;"></div>
<div class="t" style="left:524px;width:100px;text-align:right;top:516.19px;font-size:11px;color:#D030D0;">| Z | [ohm]</div>
<div class="a" style="left:632px;top:516px;width:13px;height:12px;box-sizing:border-box;background:#E020E0;border-top:1px solid #fff;border-left:1px solid #fff;border-bottom:1px solid #716F64;border-right:1px solid #716F64;box-shadow:inset -1px -1px 0 #ACA899;"></div>
<div class="a" style="left:651px;top:514px;width:13px;height:13px;box-sizing:border-box;background:#fff;border-top:1px solid #ACA899;border-left:1px solid #ACA899;border-bottom:1px solid #fff;border-right:1px solid #fff;box-shadow:inset 1px 1px 0 #716F64, inset -1px -1px 0 #F1EFE2;"></div>
<svg class="a" style="left:651px;top:514px" width="13" height="13"><path d="M3 5.2 L5.4 8.4 L9.8 3.4" stroke="#000" stroke-width="2.2" fill="none"/></svg>
<div class="t" style="left:628px;width:100px;text-align:right;top:516.19px;font-size:11px;color:#30C830;">Rs [ohm]</div>
<div class="a" style="left:736px;top:516px;width:13px;height:12px;box-sizing:border-box;background:#20E020;border-top:1px solid #fff;border-left:1px solid #fff;border-bottom:1px solid #716F64;border-right:1px solid #716F64;box-shadow:inset -1px -1px 0 #ACA899;"></div>
<div class="a" style="left:755px;top:514px;width:13px;height:13px;box-sizing:border-box;background:#fff;border-top:1px solid #ACA899;border-left:1px solid #ACA899;border-bottom:1px solid #fff;border-right:1px solid #fff;box-shadow:inset 1px 1px 0 #716F64, inset -1px -1px 0 #F1EFE2;"></div>
<div class="t" style="left:524px;width:100px;text-align:right;top:538.19px;font-size:11px;color:#12127E;">R.L. [dB]</div>
<div class="a" style="left:632px;top:538px;width:13px;height:12px;box-sizing:border-box;background:#0000F0;border-top:1px solid #fff;border-left:1px solid #fff;border-bottom:1px solid #716F64;border-right:1px solid #716F64;box-shadow:inset -1px -1px 0 #ACA899;"></div>
<div class="a" style="left:651px;top:536px;width:13px;height:13px;box-sizing:border-box;background:#fff;border-top:1px solid #ACA899;border-left:1px solid #ACA899;border-bottom:1px solid #fff;border-right:1px solid #fff;box-shadow:inset 1px 1px 0 #716F64, inset -1px -1px 0 #F1EFE2;"></div>
<div class="t" style="left:628px;width:100px;text-align:right;top:538.19px;font-size:11px;color:#187818;">|Xs| [ohm]</div>
<div class="a" style="left:736px;top:538px;width:13px;height:12px;box-sizing:border-box;background:#107010;border-top:1px solid #fff;border-left:1px solid #fff;border-bottom:1px solid #716F64;border-right:1px solid #716F64;box-shadow:inset -1px -1px 0 #ACA899;"></div>
<div class="a" style="left:755px;top:536px;width:13px;height:13px;box-sizing:border-box;background:#fff;border-top:1px solid #ACA899;border-left:1px solid #ACA899;border-bottom:1px solid #fff;border-right:1px solid #fff;box-shadow:inset 1px 1px 0 #716F64, inset -1px -1px 0 #F1EFE2;"></div>
<svg class="a" style="left:755px;top:536px" width="13" height="13"><path d="M3 5.2 L5.4 8.4 L9.8 3.4" stroke="#000" stroke-width="2.2" fill="none"/></svg>
<div class="a" style="left:626px;top:556px;width:40px;height:17px;background:#ECE9D8;box-sizing:border-box;border-top:1px solid #fff;border-left:1px solid #fff;border-bottom:1px solid #716F64;border-right:1px solid #716F64;box-shadow:inset 1px 1px 0 #F1EFE2, inset -1px -1px 0 #ACA899;"></div>
<div class="t" style="left:626.5px;width:39px;text-align:center;top:558.69px;font-size:11px;color:#000;">All</div>
<div class="a" style="left:729px;top:556px;width:40px;height:17px;background:#ECE9D8;box-sizing:border-box;border-top:1px solid #fff;border-left:1px solid #fff;border-bottom:1px solid #716F64;border-right:1px solid #716F64;box-shadow:inset 1px 1px 0 #F1EFE2, inset -1px -1px 0 #ACA899;"></div>
<div class="t" style="left:729.5px;width:39px;text-align:center;top:558.69px;font-size:11px;color:#000;">None</div>
</body></html>
